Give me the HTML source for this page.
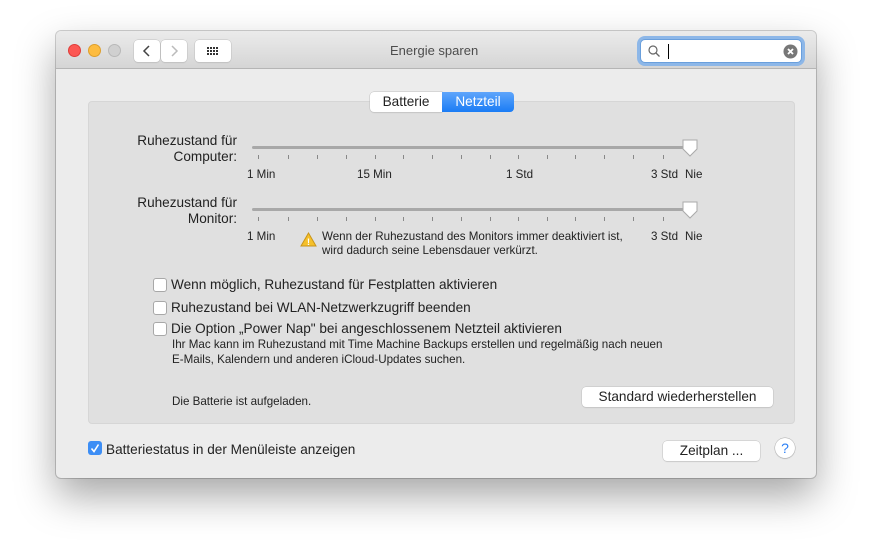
<!DOCTYPE html>
<html><head><meta charset="utf-8"><style>
*{margin:0;padding:0;box-sizing:border-box}
body{width:872px;height:559px;background:#fff;position:relative;overflow:hidden;font-family:"Liberation Sans",sans-serif;color:#222}
.a{position:absolute}
.win{left:56px;top:31px;width:760px;height:447px;background:#ececec;border-radius:5px;box-shadow:0 18px 40px rgba(0,0,0,.35),0 0 0 1px rgba(0,0,0,.18);overflow:hidden}
.tb{left:0;top:0;width:760px;height:38px;background:linear-gradient(#ebebeb,#d5d5d5);border-bottom:1px solid #b5b5b5}
.dot{width:13px;height:13px;border-radius:50%;top:13px}
.btn{background:#fff;border-radius:4px;box-shadow:0 0 0 .5px #c0c0c0,0 1px 1px rgba(0,0,0,.1)}
.box{left:32px;top:70px;width:707px;height:323px;background:#e0e0e0;border:1px solid #d6d6d6;border-radius:4px}
.t13{font-size:13.6px;white-space:nowrap}
.t11{font-size:11.6px;white-space:nowrap}
.cb{width:14px;height:14px;background:#fff;border:1px solid #a8a8a8;border-radius:3px}
.track{height:3px;background:#a8a8a8;border-radius:2px}
.tick{width:1px;height:4px;background:#888}
</style></head><body>
<div class="a win">
 <div class="a tb">
  <div class="a dot" style="left:12px;background:#fc5753;border:1px solid #df3d39"></div>
  <div class="a dot" style="left:32px;background:#fdbc40;border:1px solid #de9f2c"></div>
  <div class="a dot" style="left:52px;background:#d0d0d0;border:1px solid #b8b8b8"></div>
  <div class="a btn" style="left:78px;top:9px;width:26px;height:22px"><svg width="26" height="22"><path d="M15 6l-5 5 5 5" stroke="#444" stroke-width="1.5" fill="none"/></svg></div>
  <div class="a btn" style="left:105px;top:9px;width:26px;height:22px"><svg width="26" height="22"><path d="M11 6l5 5-5 5" stroke="#bbb" stroke-width="1.5" fill="none"/></svg></div>
  <div class="a btn" style="left:139px;top:9px;width:36px;height:22px"><svg width="36" height="22" fill="#333"><g><rect x="12" y="7" width="2" height="2"/><rect x="15" y="7" width="2" height="2"/><rect x="18" y="7" width="2" height="2"/><rect x="21" y="7" width="2" height="2"/><rect x="12" y="10" width="2" height="2"/><rect x="15" y="10" width="2" height="2"/><rect x="18" y="10" width="2" height="2"/><rect x="21" y="10" width="2" height="2"/><rect x="12" y="13" width="2" height="2"/><rect x="15" y="13" width="2" height="2"/><rect x="18" y="13" width="2" height="2"/><rect x="21" y="13" width="2" height="2"/></g></svg></div>
  <div class="a" style="left:334px;top:12px;color:#4d4d4d;font-size:13px">Energie sparen</div>
  <div class="a" style="left:584px;top:8px;width:162px;height:24px;background:#fff;border-radius:5px;box-shadow:0 0 0 3px #8db7e8;border:1px solid #6a9fdc"></div>
  <svg class="a" style="left:590px;top:12px" width="16" height="16"><circle cx="7" cy="7" r="4" stroke="#666" stroke-width="1.2" fill="none"/><path d="M10 10l3.5 3.5" stroke="#666" stroke-width="1.3"/></svg>
  <div class="a" style="left:612px;top:13px;width:1px;height:15px;background:#000"></div>
  <svg class="a" style="left:727px;top:13px" width="15" height="15"><circle cx="7.5" cy="7.5" r="7" fill="#777"/><path d="M5 5l5 5M10 5l-5 5" stroke="#fff" stroke-width="1.8"/></svg>
 </div>
 <div class="a box"></div>
 <div class="a btn t13" style="left:314px;top:61px;width:72px;height:20px;text-align:center;line-height:20px;border-radius:4px 0 0 4px">Batterie</div>
 <div class="a t13" style="left:386px;top:61px;width:72px;height:20px;text-align:center;line-height:20px;background:linear-gradient(#5fa5fb,#1a7cf5);color:#fff;border-radius:0 4px 4px 0">Netzteil</div>

 <div class="a t13" style="left:40px;top:102px;width:141px;text-align:right;line-height:16px">Ruhezustand für<br>Computer:</div>
 <div class="a track" style="left:196px;top:115px;width:440px"></div>
 <div id="t1"></div>
 <div class="a t11" style="left:191px;top:137px">1 Min</div>
 <div class="a t11" style="left:301px;top:137px">15 Min</div>
 <div class="a t11" style="left:450px;top:137px">1 Std</div>
 <div class="a t11" style="left:595px;top:137px">3 Std</div>
 <div class="a t11" style="left:629px;top:137px">Nie</div>
 <svg class="a" style="left:625px;top:108px" width="18" height="20"><path d="M2 1h14v9l-7 7-7-7z" fill="#fff" stroke="#aaa"/></svg>

 <div class="a t13" style="left:40px;top:164px;width:141px;text-align:right;line-height:16px">Ruhezustand für<br>Monitor:</div>
 <div class="a track" style="left:196px;top:177px;width:440px"></div>
 <div class="a t11" style="left:191px;top:199px">1 Min</div>
 <div class="a t11" style="left:595px;top:199px">3 Std</div>
 <div class="a t11" style="left:629px;top:199px">Nie</div>
 <svg class="a" style="left:625px;top:170px" width="18" height="20"><path d="M2 1h14v9l-7 7-7-7z" fill="#fff" stroke="#aaa"/></svg>
 <svg class="a" style="left:244px;top:201px" width="17" height="15"><path d="M8.5 1L16 14H1z" fill="#f5c02a" stroke="#c9951a"/><text x="8.5" y="13" font-size="9" text-anchor="middle" fill="#fff" font-family="Liberation Sans" font-weight="bold">!</text></svg>
 <div class="a t11" style="left:266px;top:199px;line-height:14px">Wenn der Ruhezustand des Monitors immer deaktiviert ist,<br>wird dadurch seine Lebensdauer verkürzt.</div>

 <div class="a cb" style="left:97px;top:247px"></div>
 <div class="a t13" style="left:115px;top:246px">Wenn möglich, Ruhezustand für Festplatten aktivieren</div>
 <div class="a cb" style="left:97px;top:270px"></div>
 <div class="a t13" style="left:115px;top:269px">Ruhezustand bei WLAN-Netzwerkzugriff beenden</div>
 <div class="a cb" style="left:97px;top:291px"></div>
 <div class="a t13" style="left:115px;top:290px">Die Option „Power Nap" bei angeschlossenem Netzteil aktivieren</div>
 <div class="a t11" style="left:116px;top:306px;line-height:15px">Ihr Mac kann im Ruhezustand mit Time Machine Backups erstellen und regelmäßig nach neuen<br>E-Mails, Kalendern und anderen iCloud-Updates suchen.</div>

 <div class="a t11" style="left:116px;top:364px">Die Batterie ist aufgeladen.</div>
 <div class="a btn t13" style="left:526px;top:356px;width:191px;height:20px;text-align:center;line-height:20px">Standard wiederherstellen</div>

 <div class="a" style="left:32px;top:410px;width:14px;height:14px;background:#3d8ef5;border-radius:3px"><svg width="14" height="14"><path d="M3.5 7.5l2.5 3 4.5-7" stroke="#fff" stroke-width="1.6" fill="none"/></svg></div>
 <div class="a t13" style="left:50px;top:411px">Batteriestatus in der Menüleiste anzeigen</div>
 <div class="a btn t13" style="left:607px;top:410px;width:97px;height:20px;text-align:center;line-height:20px">Zeitplan ...</div>
 <div class="a" style="left:719px;top:407px;width:20px;height:20px;border-radius:50%;background:#fff;box-shadow:0 0 0 .5px #aaa,0 1px 1px rgba(0,0,0,.15);color:#2a7ff5;font-size:14px;text-align:center;line-height:20px">?</div>
</div>
<script>
var s='';[258,288,317,346,375,403,432,461,490,518,547,575,604,633,663].forEach(function(x){s+='<div class="a tick" style="left:'+(x-56)+'px;top:124px"></div><div class="a tick" style="left:'+(x-56)+'px;top:186px"></div>';});
document.getElementById('t1').outerHTML=s;
</script>
</body></html>
